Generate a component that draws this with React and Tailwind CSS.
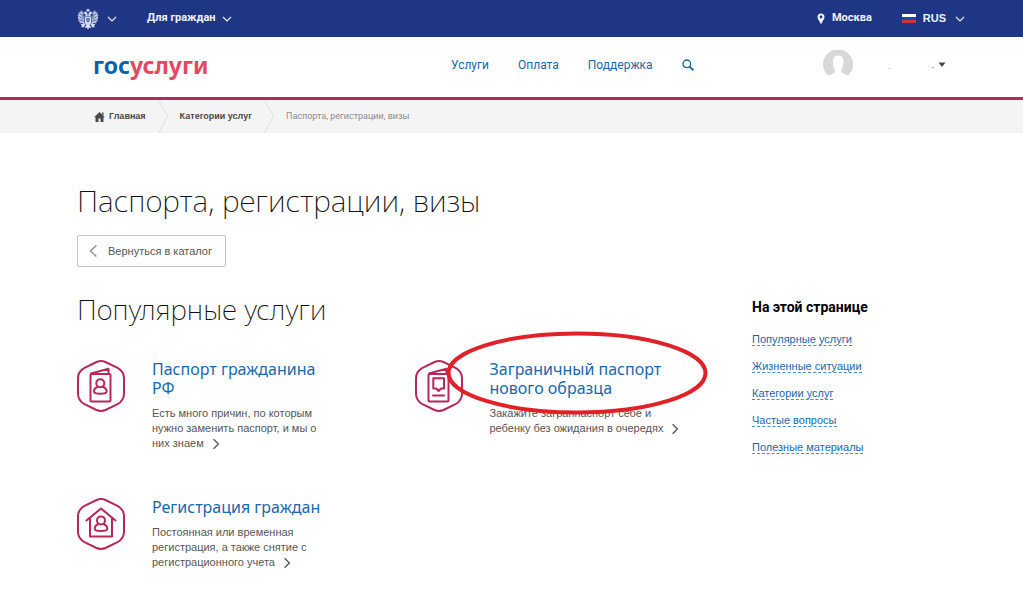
import React from "react";

const ARIAL = "font-['Liberation_Sans',Arial,sans-serif]";

function Chevron({ dir = "down", className = "" }) {
  const d = {
    down: "M1 3 L5 7 L9 3",
    left: "M7 0.5 L2 5 L7 9.5",
    right: "M3 1 L7 5 L3 9",
  }[dir];
  return (
    <svg viewBox="0 0 10 10" fill="none" stroke="currentColor" strokeWidth="1.1" className={className} aria-hidden="true">
      <path d={d} />
    </svg>
  );
}

function Eagle() {
  return (
    <svg viewBox="0 0 44 44" className="h-[22px] w-[22px] shrink-0" aria-hidden="true">
      <g fill="#d5dcf2">
        <path d="M22 1l1.500 2h2l-1 4h-5l-1-4h2z" />
        <path d="M12 12l2-4 4-1 3 4v3l1 2 1-2v-3l3-4 4 1 2 4-4-1-1 5h-10l-1-5z" />
        <path d="M15 17h14l1 8-3 7-5 4-5-4-3-7z" />
        <path d="M19 33h6l4 7-4-1-3 4-3-4-4 1z" />
        <path d="M15 30l2 3-4 6-5-1 2-3-3-2zM29 30l-2 3 4 6 5-1-2-3 3-2z" />
        <path d="M11 6L8 4 9 8 5 6 6 10 2 9 4 14 1 14 3 19 1 20 4 24 2 26 6 28 5 31 10 30 15 31 16 20 12 14z" opacity=".85" />
        <path d="M33 6L36 4 35 8 39 6 38 10 42 9 40 14 43 14 41 19 43 20 40 24 42 26 38 28 39 31 34 30 29 31 28 20 32 14z" opacity=".85" />
      </g>
      <g fill="none" stroke="#213a8a" strokeWidth="1.300">
        <path d="M7 11L14 20M5 17L13 23M5 24L13 26M15 18L15 29" />
        <path d="M37 11L30 20M39 17L31 23M39 24L31 26M29 18L29 29" />
      </g>
      <path d="M19 20h6v5l-3 4-3-4z" fill="#213a8a" />
      <path d="M21 21h2v5h-2z" fill="#d5dcf2" />
    </svg>
  );
}

function Hexagon({ children }) {
  return (
    <svg
      viewBox="0 0 48 52"
      className="h-[52px] w-12 shrink-0"
      fill="none"
      stroke="#b9275a"
      strokeWidth="2"
      strokeLinejoin="round"
      strokeLinecap="round"
      aria-hidden="true"
    >
      <path d="M19.5 2Q24 .2 28.500 2L40.500 7.800Q46.800 11.300 47 18V34Q46.800 40.700 40.500 44.200L28.500 50Q24 51.800 19.500 50L7.500 44.200Q1.200 40.700 1 34V18Q1.200 11.300 7.500 7.800L19.500 2Z" />
      {children}
    </svg>
  );
}

function PassportIcon() {
  return (
    <Hexagon>
      <rect x="13.5" y="14" width="20" height="27.5" rx="1" />
      <path d="M14 13.5L31.5 8.8V14" />
      <circle cx="23.3" cy="23.2" r="4" />
      <path d="M20.8 26.8Q17 28.2 17 31.5Q17 33.7 23.3 33.7Q29.6 33.7 29.6 31.5Q29.6 28.2 25.8 26.8" />
    </Hexagon>
  );
}

function ForeignPassportIcon() {
  return (
    <Hexagon>
      <rect x="13.5" y="14" width="20" height="27.5" rx="1" />
      <path d="M14 13.5L31.5 8.8V14" />
      <path d="M18.3 18.3H29V28.5H26L23.6 31L21.2 28.5H18.3Z" />
      <path d="M18 35.5H29" />
    </Hexagon>
  );
}

function HouseIcon() {
  return (
    <Hexagon>
      <path d="M9.5 22.5L24 10.5L38.5 22.5" />
      <path d="M13 20V38.5H35V20" />
      <circle cx="24" cy="22.4" r="4" />
      <path d="M21.5 26Q17.7 27.4 17.7 30.7Q17.7 32.9 24 32.9Q30.3 32.9 30.3 30.7Q30.3 27.4 26.5 26" />
    </Hexagon>
  );
}

function Separator() {
  return (
    <svg viewBox="0 0 10 33" className="mx-3 h-[33px] w-[10px]" fill="none" stroke="#dedede" aria-hidden="true">
      <path d="M.5 0L9.5 16.5L.5 33" />
    </svg>
  );
}

const services = [
  {
    icon: PassportIcon,
    title: "Паспорт гражданина РФ",
    text: "Есть много причин, по которым нужно заменить паспорт, и мы о них\u00a0знаем",
  },
  {
    icon: ForeignPassportIcon,
    title: "Заграничный паспорт нового образца",
    text: "Закажите загранпаспорт себе и ребенку без ожидания в очередях",
    marked: true,
  },
  {
    icon: HouseIcon,
    title: "Регистрация граждан",
    text: "Постоянная или временная регистрация, а также снятие с регистрационного учета",
  },
];

const sections = ["Популярные услуги", "Жизненные ситуации", "Категории услуг", "Частые вопросы", "Полезные материалы"];

function Service({ icon: Icon, title, text, marked }) {
  return (
    <article className="relative flex gap-[27px]">
      <Icon />
      <div className="w-48">
        <h3 className="max-w-[180px] font-['Noto_Sans',sans-serif] text-[16px] leading-[19px] text-[#1a67ad]">
          <a href="#service">{title}</a>
        </h3>
        <p className="mt-2 text-[11px] leading-[15px] text-[#565656]">
          {text}
          <Chevron dir="right" className="ml-1.5 inline-block h-3 w-3 align-[-3px]" />
        </p>
      </div>
      {marked && (
        <svg viewBox="0 0 262 84" className="pointer-events-none absolute -top-[29px] left-[31px] h-[84px] w-[262px]" fill="none" aria-hidden="true">
          <ellipse cx="131" cy="42" rx="128.5" ry="39.5" stroke="#e02128" strokeWidth="4" />
        </svg>
      )}
    </article>
  );
}

export default function App() {
  return (
    <div className={`min-h-screen bg-white text-[#333] ${ARIAL}`}>
      <div className="flex h-[37px] items-center justify-between bg-[#1f3684] pr-[58px] pl-[77px] font-['Roboto',sans-serif] text-[11px] font-bold text-[#edf1fb]">
        <div className="flex items-center">
          <button type="button" aria-label="Портал" className="flex items-center gap-2">
            <Eagle />
            <Chevron className="h-2.5 w-2.5" />
          </button>
          <button type="button" className="ml-[30px] flex items-center gap-1.5">
            Для граждан
            <Chevron className="h-2.5 w-2.5" />
          </button>
        </div>
        <div className="flex items-center">
          <button type="button" className="flex items-center gap-[7px]">
            <svg viewBox="0 0 8 12" className="h-3 w-2" fill="currentColor" aria-hidden="true">
              <path fillRule="evenodd" d="M4 .5A3.500 3.500 0 0 0 .5 4C.5 6.500 3 8.500 4 11.500C5 8.500 7.500 6.500 7.500 4A3.500 3.500 0 0 0 4 .5ZM4 2.600A1.400 1.400 0 1 1 4 5.400A1.400 1.400 0 1 1 4 2.600Z" />
            </svg>
            Москва
          </button>
          <button type="button" className="ml-[30px] flex items-center">
            <svg viewBox="0 0 14 9" className="h-[9px] w-[14px]" aria-hidden="true">
              <path fill="#fff" d="M0 0h14v3H0z" />
              <path fill="#1d4aa0" d="M0 3h14v3H0z" />
              <path fill="#c93340" d="M0 6h14v3H0z" />
            </svg>
            <span className={`ml-[7px] ${ARIAL}`}>RUS</span>
            <Chevron className="ml-[9px] h-2.5 w-2.5" />
          </button>
        </div>
      </div>

      <header className="grid h-[63px] grid-cols-[358fr_495fr] items-center border-b-3 border-[#b02a5a] pr-[77px] pb-1 pl-[93px]">
        <a href="#home" className="font-['Noto_Sans',sans-serif] text-[23px] leading-7 font-bold text-[#0d62a6]">
          гос<span className="text-[#e54862]">услуги</span>
        </a>
        <div className="flex items-center justify-between">
          <nav className="flex items-center gap-[29px] font-['Roboto',sans-serif] text-[12px] text-[#1668a8]">
            <a href="#services">Услуги</a>
            <a href="#payment">Оплата</a>
            <a href="#support">Поддержка</a>
            <button type="button" aria-label="Поиск">
              <svg viewBox="0 0 12 12" className="h-3 w-3" fill="none" stroke="currentColor" strokeWidth="1.300" aria-hidden="true">
                <circle cx="4.800" cy="4.800" r="3.800" />
                <path d="M7.600 7.600L11.300 11.300" strokeWidth="2" />
              </svg>
            </button>
          </nav>
          <button type="button" aria-label="Профиль" className="flex items-center">
            <svg viewBox="0 0 30 30" className="h-[30px] w-[30px]" aria-hidden="true">
              <path fill="#d8d8d8" d="M5 25.500A15 15 0 1 1 25 25.500Q21 24 18.500 22.500L18.300 19.500Q20.500 17 20.500 11.500Q20.300 5.500 15.200 5.500Q10 5.500 9.800 11.500Q9.800 17 12 19.500L11.800 22.500Q9 24.300 5 25.500Z" />
            </svg>
            <svg viewBox="0 0 58 8" className="ml-[35px] h-2 w-[58px]" aria-hidden="true">
              <path fill="#dcdcdc" d="M0 7h3v1H0z" />
              <path fill="#999" d="M44 6h2v1h-2z" />
              <path fill="#444" d="M50.500 1.500H57.500L54 6Z" />
            </svg>
          </button>
        </div>
      </header>

      <nav aria-label="Навигация" className="flex h-[33px] items-center bg-[#f4f4f4] pl-[94px] font-['Roboto',sans-serif] text-[9px] text-[#4a4a4a]">
        <a href="#home" className={`flex items-center gap-1 font-bold ${ARIAL}`}>
          <svg viewBox="0 0 11 10" className="h-2.5 w-[11px]" fill="currentColor" aria-hidden="true">
            <path d="M5.500 0L11 5.300H9.500V10H6.500V6.500H4.500V10H1.500V5.300H0ZM8 .5H9.500V3.500L8 2Z" />
          </svg>
          Главная
        </a>
        <Separator />
        <a href="#categories" className={`font-bold ${ARIAL}`}>Категории услуг</a>
        <Separator />
        <span className="text-[#8d8d8d]">Паспорта, регистрации, визы</span>
      </nav>

      <main className="px-[77px] pt-12 pb-9">
        <h1 className="font-['Noto_Sans',sans-serif] text-[30px] leading-10 font-extralight text-[#111]">Паспорта, регистрации, визы</h1>
        <a href="#catalog" className="mt-3.5 inline-flex h-8 items-center gap-2 rounded-xs border border-[#c4c4c4] pr-[13px] pl-2.5 text-[11px] text-[#555]">
          <Chevron dir="left" className="h-3 w-3 text-[#888]" />
          Вернуться в каталог
        </a>
        <div className="mt-[22px] grid grid-cols-[675fr_194fr]">
          <section>
            <h2 className="font-['Noto_Sans',sans-serif] text-[28px] leading-10 font-extralight text-[#111]">Популярные услуги</h2>
            <div className="mt-[31px] grid grid-cols-2 gap-y-[47px]">
              {services.map((s) => (
                <Service key={s.title} {...s} />
              ))}
            </div>
          </section>
          <aside className="pt-[9px]">
            <h2 className="font-['Roboto',sans-serif] text-[14px] leading-[18px] font-bold text-black">На этой странице</h2>
            <ul className="mt-4 flex flex-col gap-3 text-[11px] leading-[15px] text-[#1a67ad]">
              {sections.map((s) => (
                <li key={s}>
                  <a href="#section" className="border-b border-dashed border-[#4e8cc4]">{s}</a>
                </li>
              ))}
            </ul>
          </aside>
        </div>
      </main>
    </div>
  );
}
